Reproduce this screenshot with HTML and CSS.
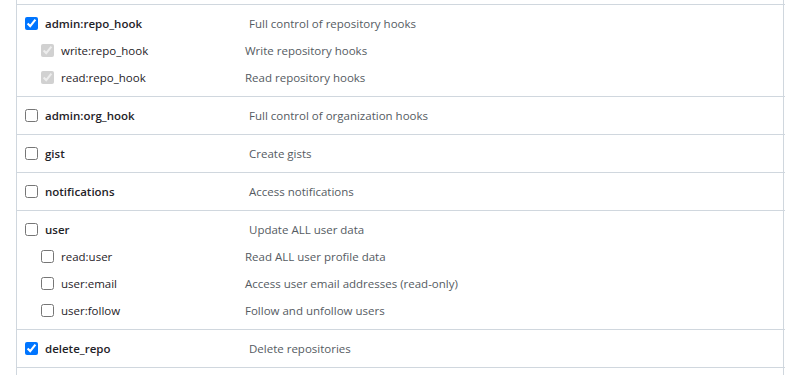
FILE: index.html
```html
<!doctype html>
<html lang="en">

<head>
    <meta charset="utf-8">
    <title>scopes</title>
    <meta name="viewport" content="width=device-width, initial-scale=1">
    <link rel="stylesheet" href="styles.css">
</head>

<body>
    <div class="scopes">
        <div class="scope-group">
            <label class="scope">
                <input type="checkbox" checked>
                <span class="scope-name">admin:repo_hook</span>
                <span class="scope-desc">Full control of repository hooks</span>
            </label>
            <label class="scope sub">
                <input type="checkbox" checked disabled>
                <span class="scope-name">write:repo_hook</span>
                <span class="scope-desc">Write repository hooks</span>
            </label>
            <label class="scope sub">
                <input type="checkbox" checked disabled>
                <span class="scope-name">read:repo_hook</span>
                <span class="scope-desc">Read repository hooks</span>
            </label>
        </div>
        <div class="scope-group">
            <label class="scope">
                <input type="checkbox">
                <span class="scope-name">admin:org_hook</span>
                <span class="scope-desc">Full control of organization hooks</span>
            </label>
        </div>
        <div class="scope-group">
            <label class="scope">
                <input type="checkbox">
                <span class="scope-name">gist</span>
                <span class="scope-desc">Create gists</span>
            </label>
        </div>
        <div class="scope-group">
            <label class="scope">
                <input type="checkbox">
                <span class="scope-name">notifications</span>
                <span class="scope-desc">Access notifications</span>
            </label>
        </div>
        <div class="scope-group">
            <label class="scope">
                <input type="checkbox">
                <span class="scope-name">user</span>
                <span class="scope-desc">Update ALL user data</span>
            </label>
            <label class="scope sub">
                <input type="checkbox">
                <span class="scope-name">read:user</span>
                <span class="scope-desc">Read ALL user profile data</span>
            </label>
            <label class="scope sub">
                <input type="checkbox">
                <span class="scope-name">user:email</span>
                <span class="scope-desc">Access user email addresses (read-only)</span>
            </label>
            <label class="scope sub">
                <input type="checkbox">
                <span class="scope-name">user:follow</span>
                <span class="scope-desc">Follow and unfollow users</span>
            </label>
        </div>
        <div class="scope-group">
            <label class="scope">
                <input type="checkbox" checked>
                <span class="scope-name">delete_repo</span>
                <span class="scope-desc">Delete repositories</span>
            </label>
        </div>
        <div class="scope-group empty"></div>
    </div>
</body>

</html>
```

FILE: styles.css
```css
html,
body {
    margin: 0;
    padding: 0;
    background: #fff;
    font-family: 'Open Sans', sans-serif;
    font-size: 11.5px;
    color: #1f2328;
}

.scopes {
    margin-left: 16px;
    width: 766px;
    padding-top: 4px;
    border-left: 1px solid #d0d7de;
    border-right: 1px solid #d0d7de;
    height: 371px;
}

.scope-group {
    border-top: 1px solid #d0d7de;
    margin-right: -2px;
    padding: 5px 0;
}

.scope {
    display: flex;
    align-items: center;
    height: 27px;
    padding-left: 8px;
}

.scope input {
    margin: 0 7px 0 0;
    width: 13px;
    height: 13px;
}

.scope-name {
    width: 204px;
    font-weight: 600;
}

.scope-desc {
    color: #555b62;
}

.scope.sub {
    padding-left: 24px;
}

.scope.sub .scope-name {
    width: 184px;
    font-weight: 400;
}
```
